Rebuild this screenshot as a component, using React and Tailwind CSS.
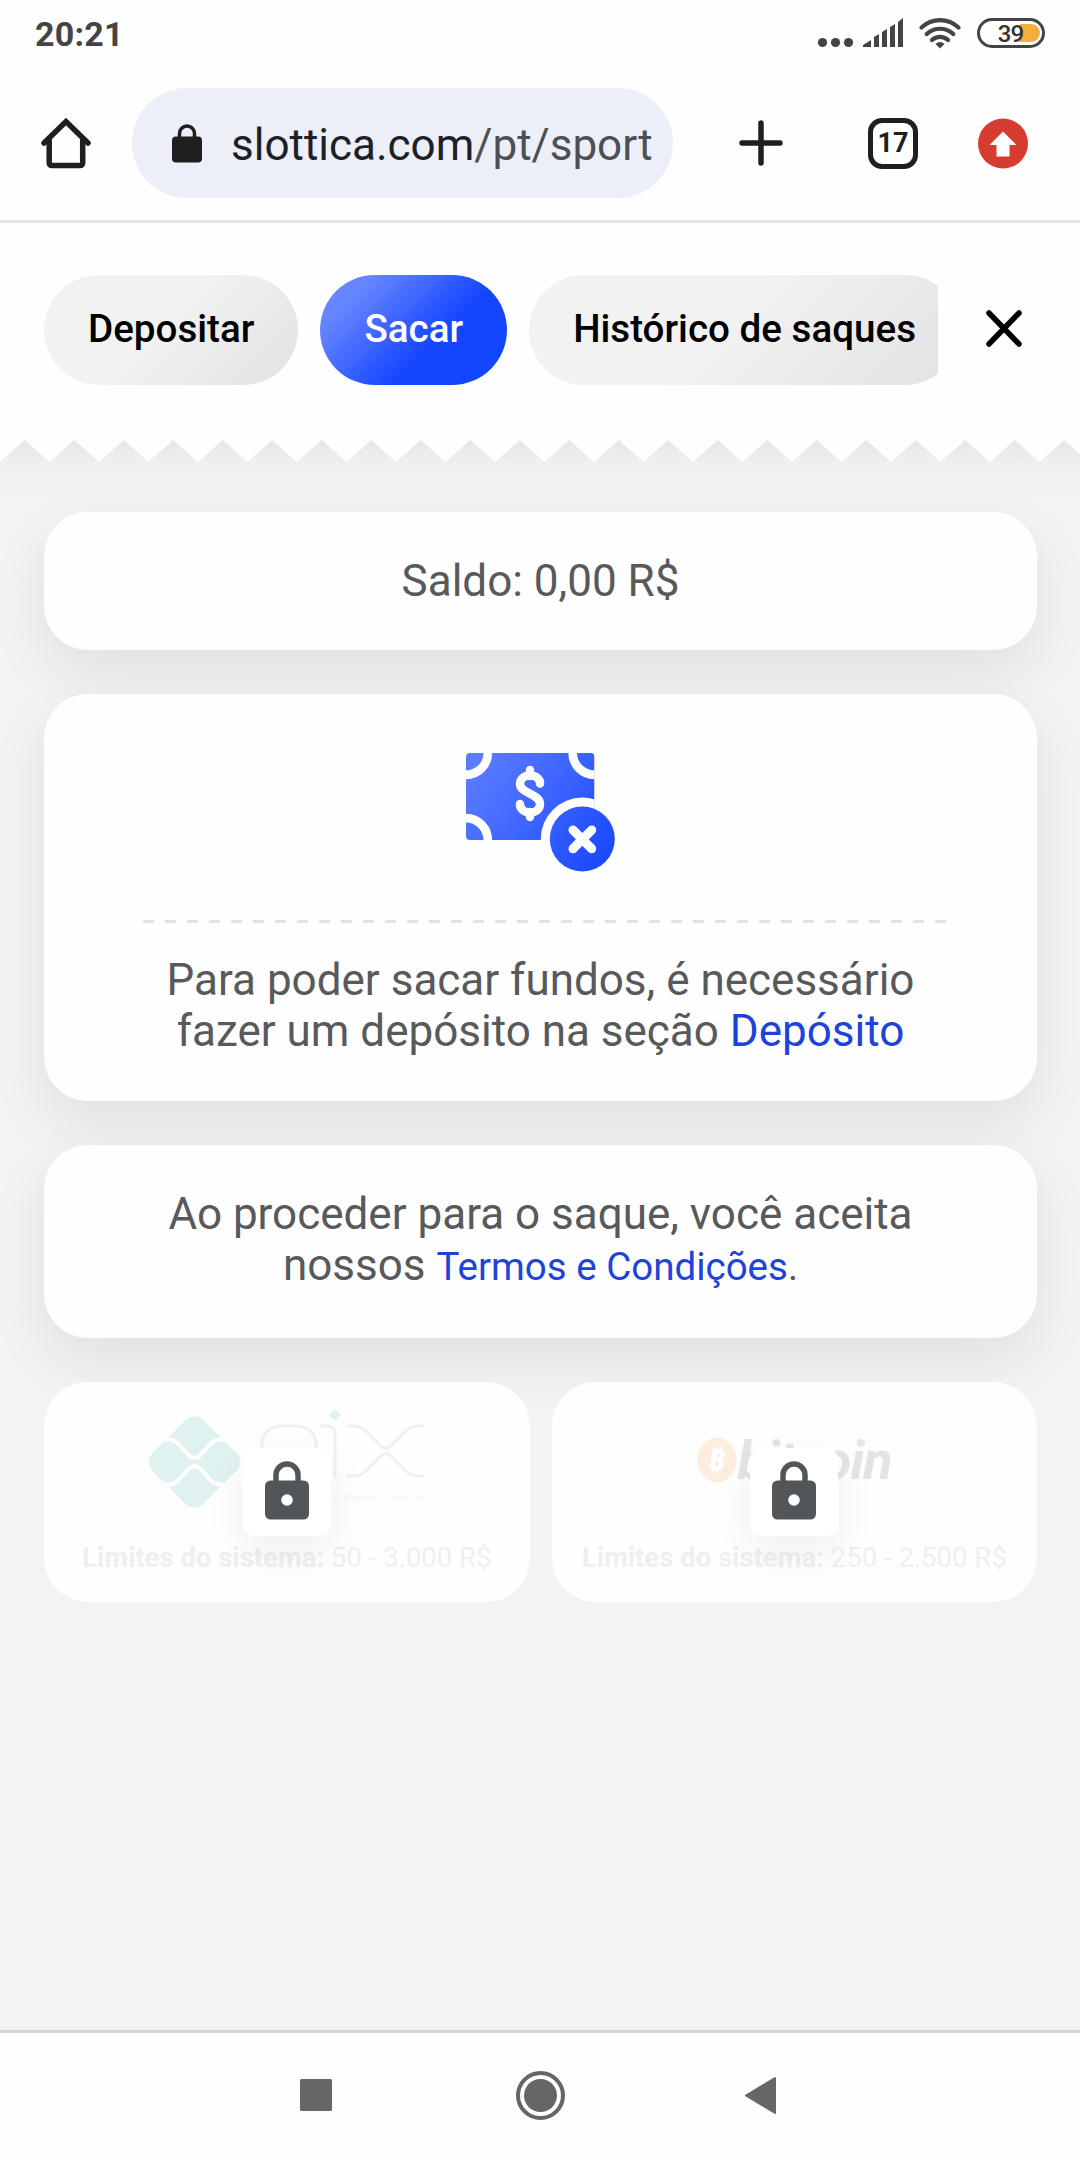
import React from 'react';

const TABS = [
  { label: 'Depositar', active: false },
  { label: 'Sacar', active: true },
  { label: 'Histórico de saques', active: false },
];

function StatusBar() {
  return (
    <div className="flex h-[66px] items-center justify-between pl-[35px] pr-[34px] pt-[2px] text-[#444]">
      <span className="text-[34px] font-bold leading-none tracking-[0.2px]">20:21</span>
      <svg className="mb-[2px]" width="230" height="36" viewBox="816 15 230 36" fill="none">
        <g fill="#444">
          <circle cx="822.5" cy="42.5" r="4.6" />
          <circle cx="835.5" cy="42.5" r="4.6" />
          <circle cx="848.5" cy="42.5" r="4.6" />
          <path d="M863 47v-2l8-5v7zM874 47V37l5-3v13zM882 47V32l5-3v18zM890 47V27l5-3v23zM898 47V22l5-4v29z" />
          <path d="M940 48.5l-4.5-4.5a6.3 6.3 0 0 1 9 0z" />
        </g>
        <g stroke="#444" strokeWidth="4.2" strokeLinecap="round">
          <path d="M921.5 27.5a27 27 0 0 1 37 0" />
          <path d="M926.7 34a19.5 19.5 0 0 1 26.6 0" />
          <path d="M932 40a12 12 0 0 1 16 0" />
        </g>
        <rect x="978.5" y="19.5" width="65" height="27" rx="13.5" stroke="#444" strokeWidth="3" />
        <path d="M1020 24h11a9 9 0 0 1 0 18h-11z" fill="#f4ae3d" />
        <text x="1010.5" y="41.5" textAnchor="middle" fontSize="24" fontWeight="500" fill="#333" letterSpacing="-1">39</text>
      </svg>
    </div>
  );
}

function BrowserBar() {
  return (
    <div className="flex h-[157px] items-center border-b-[3px] border-[#e3e3e3] pl-[38px] pr-[52px]">
      <svg className="mr-[38px] shrink-0" width="56" height="56" viewBox="0 0 56 56" fill="none" stroke="#1f1f1f" strokeWidth="5.5" strokeLinecap="round" strokeLinejoin="round">
        <path d="M6 28L28 6.5 50 28" strokeLinejoin="miter" />
        <path d="M11.2 25v22.5q0 3 3 3h27.5q3 0 3-3V25" />
      </svg>
      <div className="flex h-[110px] w-[541px] shrink-0 items-center rounded-full bg-[#edeff8] pl-[40px]">
        <svg width="30" height="40" viewBox="0 0 30 40">
          <path d="M7.5 15V10.5a7.5 7.5 0 0 1 15 0V15" fill="none" stroke="#1f1f1f" strokeWidth="3.5" />
          <rect y="13.5" width="30" height="26" rx="4" fill="#1f1f1f" />
        </svg>
        <span className="ml-[29px] whitespace-nowrap pt-[4px] text-[44px] leading-none text-[#1d2026]">
          slottica.com<span className="text-[#4c5055]">/pt/sport</span>
        </span>
      </div>
      <svg className="ml-[66px] shrink-0" width="44" height="46" viewBox="0 0 44 46" stroke="#1f1f1f" strokeWidth="5.5" strokeLinecap="round">
        <path d="M22 3v40M3 23h38" />
      </svg>
      <div className="ml-[85px] flex h-[51px] w-[50px] shrink-0 items-center justify-center rounded-[14px] border-[5.5px] border-[#1f1f1f] text-[27px] font-bold leading-none text-[#1f1f1f]">
        17
      </div>
      <svg className="ml-[60px] shrink-0" width="50" height="51" viewBox="0 0 50 51">
        <circle cx="25" cy="25.5" r="25" fill="#d63c2f" />
        <path d="M25 13.5L38.5 27H31.5V38.5H18.5V27H11.5z" fill="#fff" />
      </svg>
    </div>
  );
}

function TabRow() {
  return (
    <div className="flex h-[217px] items-start bg-[#fefefe] pl-11 pt-[52px]">
      <div className="flex w-[894px] shrink-0 gap-[22px] overflow-hidden">
        {TABS.map((tab) => (
          <button
            key={tab.label}
            type="button"
            className={`h-[110px] shrink-0 whitespace-nowrap rounded-full px-11 pb-[2px] text-[38.6px] font-medium leading-none ${
              tab.active
                ? 'bg-[linear-gradient(135deg,#6685ff_18%,#1445ff_62%)] text-white'
                : 'bg-[linear-gradient(135deg,#f2f2f2_45%,#e2e2e2)] text-black'
            }`}
          >
            {tab.label}
          </button>
        ))}
      </div>
      <svg className="ml-[48px] mt-[35px]" width="36" height="37" viewBox="0 0 36 37" stroke="#000" strokeWidth="5.5" strokeLinecap="round">
        <path d="M3 3l30 31M33 3L3 34" />
      </svg>
    </div>
  );
}

/* torn paper edge under the tabs */
function ZigZag() {
  return (
    <svg className="block" width="1080" height="24" viewBox="0 0 1080 24">
      <defs>
        <pattern id="teeth" width="49.5" height="24" patternUnits="userSpaceOnUse">
          <path d="M0 0H49.5V22L24.75 0 0 22z" fill="#fefefe" />
        </pattern>
      </defs>
      <rect width="1080" height="24" fill="url(#teeth)" />
    </svg>
  );
}

function MoneyIcon() {
  return (
    <svg width="150" height="120" viewBox="466 753 150 120" fill="none">
      <defs>
        <linearGradient id="bill" x1="475" y1="765" x2="612" y2="865" gradientUnits="userSpaceOnUse">
          <stop stopColor="#5b7cff" />
          <stop offset="1" stopColor="#1747ff" />
        </linearGradient>
        <clipPath id="billClip">
          <rect x="466" y="753" width="128.5" height="87" rx="4" />
        </clipPath>
      </defs>
      <g clipPath="url(#billClip)">
        <rect x="466" y="753" width="128.5" height="87" fill="url(#bill)" />
        <g stroke="#fefefe" strokeWidth="8.7">
          <circle cx="466" cy="753" r="21.8" />
          <circle cx="594.5" cy="753" r="21.8" />
          <circle cx="466" cy="840" r="21.8" />
        </g>
        <circle cx="582.3" cy="839" r="41.5" fill="#fefefe" />
      </g>
      <path
        d="M530 770v6M530 812v5M540 783.5c0-4.5-4-8-10-8s-10 3.5-10 8.5c0 9.5 20 9.5 20 20 0 5-4 8.5-10 8.500s-10-3.5-10-8.5"
        stroke="#fefefe"
        strokeWidth="8.5"
        strokeLinecap="round"
      />
      <circle cx="582.3" cy="839" r="32.5" fill="url(#bill)" />
      <path d="M573 830l18.7 18.7M591.7 830L573 848.7" stroke="#fefefe" strokeWidth="9" strokeLinecap="round" />
    </svg>
  );
}

function PixLogo() {
  return (
    <svg className="absolute left-[105px] top-[26px]" width="276" height="108" viewBox="149 1408 276 108" fill="none">
      <rect x="158.5" y="1426" width="72" height="72" rx="13" transform="rotate(45 194.5 1462)" fill="#e0f2ef" />
      <path d="M154 1439.5h14q6 0 10 4l11 12q5.5 5 11 0l11-12q4-4 10-4h14M154 1484.5h14q6 0 10-4l11-12q5.5-5 11 0l11 12q4 4 10 4h14" stroke="#fefefe" strokeWidth="4" />
      <g stroke="#f0f0f0" strokeWidth="3">
        <path d="M261.5 1508v-60q0-22 22-22h11q22 0 22 22v12q0 16-14 18" />
        <path d="M321 1426h6q8 0 8 8v44" />
        <path d="M347 1426h6q8 0 13 5l15 15q5 5 10 0l15-15q5-5 12-5h6M347 1476h6q8 0 13-5l15-15q5-5 10 0l15 15q5 5 12 5h6" />
      </g>
      <path d="M335 1409l6 6-6 6-6-6z" fill="#e0f2ef" />
      <text x="424" y="1501" textAnchor="end" fontSize="9.5" fill="#f5f5f5" textLength="150">powered by Banco Central</text>
    </svg>
  );
}

function BitcoinLogo() {
  return (
    <div className="absolute left-[145px] top-[54px] flex items-center">
      <svg width="40" height="46" viewBox="0 0 40 46">
        <ellipse cx="20" cy="23" rx="19.5" ry="22.5" fill="#fdeddd" />
        <text x="20" y="33" textAnchor="middle" fontSize="29" fontWeight="700" fill="#fff" transform="rotate(10 20 23)">₿</text>
      </svg>
      <span className="ml-[1px] pt-[2px] text-[54px] font-bold italic leading-[46px] tracking-[-1px] text-[#e4e4e4]">bitcoin</span>
    </div>
  );
}

function LockBadge() {
  return (
    <div className="absolute left-1/2 top-[66px] flex h-[88px] w-[88px] -translate-x-1/2 justify-center rounded-[11px] bg-white pt-[13px] shadow-[0_16px_44px_rgba(0,0,0,0.06)]">
      <svg width="44" height="59" viewBox="0 0 44 59">
        <path d="M11 22V14a11 11 0 0 1 22 0v8" fill="none" stroke="#535658" strokeWidth="5.5" />
        <rect y="19.5" width="44" height="39" rx="5.5" fill="#535658" />
        <circle cx="22" cy="39" r="5.8" fill="#fff" />
      </svg>
    </div>
  );
}

function MethodCard({ logo, limits }) {
  return (
    <div className="relative h-[220px] flex-1 rounded-[44px] bg-[#fefefe]">
      {logo}
      <p className="absolute inset-x-0 top-[160px] whitespace-nowrap text-center text-[27.5px] leading-[32px] text-[#efefef]">
        <b>Limites do sistema:</b> {limits}
      </p>
      <LockBadge />
    </div>
  );
}

function Card({ className, children }) {
  return (
    <div className={`rounded-[44px] bg-[#fefefe] text-center text-[44px] leading-[51px] text-[#58595b] shadow-[0_22px_60px_rgba(0,0,0,0.08)] ${className}`}>
      {children}
    </div>
  );
}

function NavBar() {
  return (
    <div className="flex h-[130px] items-start border-t-[3px] border-[#d3d3d3] bg-[#fefefe]">
      <svg width="1080" height="127" viewBox="0 2033 1080 127">
        <rect x="300" y="2079" width="32" height="32" rx="1.5" fill="#666" />
        <circle cx="540.5" cy="2095.5" r="22.5" fill="none" stroke="#666" strokeWidth="4" />
        <circle cx="540.5" cy="2095.5" r="16.5" fill="#666" />
        <path d="M746 2095.5L775 2078v35z" fill="#666" stroke="#666" strokeWidth="2" strokeLinejoin="round" />
      </svg>
    </div>
  );
}

export default function App() {
  return (
    <div className="flex h-[2160px] w-[1080px] flex-col overflow-hidden bg-[#fefefe] font-['Roboto','Noto_Sans',sans-serif]">
      <StatusBar />
      <BrowserBar />
      <TabRow />
      <main className="flex-1 overflow-hidden bg-[linear-gradient(#e6e6e6,#f0f0f0_24px,#f3f3f3_60px)]">
        <ZigZag />
        <div className="flex flex-col gap-11 pl-11 pr-[43px] pt-[48px]">
          <Card className="flex h-[138px] items-center justify-center">Saldo: 0,00 R$</Card>
          <Card className="flex h-[407px] flex-col items-center pt-[59px]">
            <MoneyIcon />
            <svg className="ml-[8px] mt-[47px]" width="803" height="3" viewBox="0 0 803 3">
              <path d="M0 1.5h803" stroke="#e3e3e3" strokeWidth="3" strokeDasharray="11 11" />
            </svg>
            <p className="mt-[32px]">
              Para poder sacar fundos, é necessário
              <br />
              fazer um depósito na seção <a className="text-[#1d43d8]">Depósito</a>
            </p>
          </Card>
          <Card className="h-[193px] pt-[44px]">
            Ao proceder para o saque, você aceita
            <br />
            nossos{' '}
            <span className="text-[38.5px] leading-none">
              <a className="text-[#1d43d8]">Termos e Condições</a>.
            </span>
          </Card>
          <div className="flex gap-[22px]">
            <MethodCard logo={<PixLogo />} limits="50 - 3.000 R$" />
            <MethodCard logo={<BitcoinLogo />} limits="250 - 2.500 R$" />
          </div>
        </div>
      </main>
      <NavBar />
    </div>
  );
}
